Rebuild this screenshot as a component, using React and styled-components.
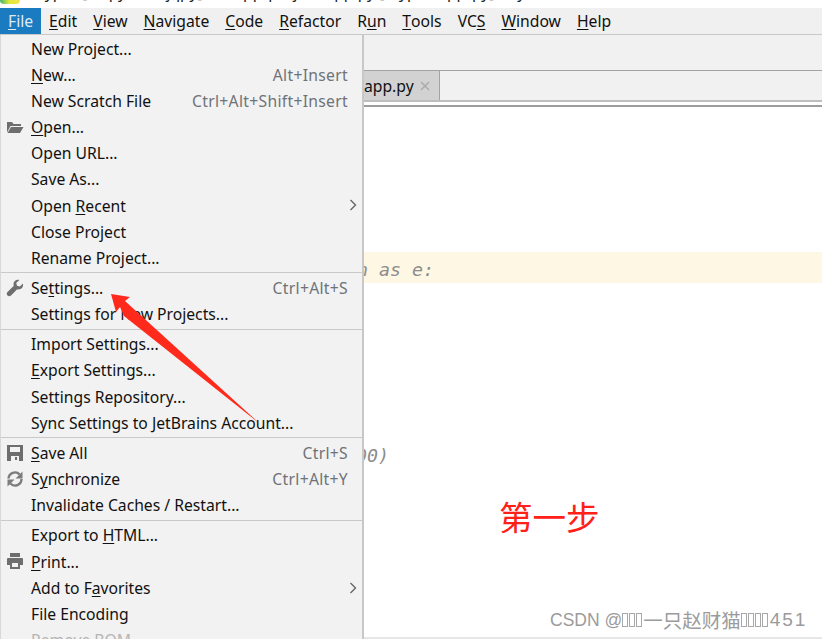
import React from 'react';
import styled, { createGlobalStyle } from 'styled-components';

const GlobalStyle = createGlobalStyle`
  html, body {
    margin: 0;
    padding: 0;
    background: #fff;
  }
  body {
    font-family: "Noto Sans", "Liberation Sans", sans-serif;
    font-size: 15.7px;
    color: #111;
  }
`;

const Page = styled.div`
  position: relative;
  width: 822px;
  height: 639px;
  overflow: hidden;
  display: flex;
  flex-direction: column;
  background: #fff;
`;

const TitleBar = styled.div`
  height: 8px;
  display: flex;
  gap: 10px;
  overflow: hidden;
  background: #fff;
`;

const AppIcon = styled.div`
  width: 20px;
  height: 4px;
  background: linear-gradient(90deg, #3fb56a, #dfe83c 45%, #f4e64a);
  border-radius: 0 0 8px 8px;
`;

const TitleText = styled.div`
  margin-top: -18px;
  line-height: 20px;
  white-space: nowrap;
  color: #222;
`;

const MenuBar = styled.div`
  height: 26px;
  display: flex;
  background: #f0f0f0;
  border-bottom: 1px solid #c9c9c9;
`;

const MenuItem = styled.div`
  display: flex;
  align-items: center;
  padding: 0 8px;
  height: 26px;
  background: ${p => (p.$active ? '#1a7bc0' : 'transparent')};
  color: ${p => (p.$active ? '#dfeaf3' : '#111')};
`;

const Toolbar = styled.div`
  height: 35px;
  background: #f1f1f1;
  border-bottom: 1px solid #a3a3a3;
`;

const TabBar = styled.div`
  height: 29px;
  display: flex;
  padding-left: 340px;
  background: #f1f1f1;
  border-bottom: 2px solid #bdbdbd;
`;

const Tab = styled.div`
  width: 75px;
  padding-left: 24px;
  display: flex;
  align-items: center;
  gap: 6px;
  background: #d2d2d2;
  border-right: 1px solid #a3a3a3;
`;

const CloseMark = styled.svg`
  width: 10px;
  height: 10px;
  stroke: #a9a9a9;
  stroke-width: 1.4;
`;

const EditorTop = styled.div`
  height: 3px;
  background: #fff;
  border-bottom: 2px solid #9c9c9c;
`;

const Editor = styled.div`
  flex: 1;
  padding-top: 145px;
  display: flex;
  flex-direction: column;
  border-bottom: 2px solid #e6e6e6;
  font-family: "DejaVu Sans Mono", "Liberation Mono", monospace;
  font-style: italic;
  font-size: 18.27px;
  color: #8c8c8c;
`;

const CodeLine = styled.div`
  box-sizing: border-box;
  height: ${p => p.$height}px;
  margin-bottom: ${p => p.$after || 0}px;
  padding-left: ${p => p.$indent}px;
  padding-top: ${p => (p.$caret ? 4 : 0)}px;
  display: flex;
  align-items: center;
  white-space: pre;
  background: ${p => (p.$caret ? '#fdf7e3' : 'transparent')};
`;

/* dropdown hangs over the editor */
const Menu = styled.div`
  position: absolute;
  left: 0;
  top: 35px;
  width: 361px;
  height: 620px;
  padding-top: 0.6px;
  background: #f2f2f2;
  border-left: 1px solid #d8d8d8;
  border-right: 2px solid #c8c8c8;
`;

const Row = styled.div`
  position: relative;
  display: flex;
  align-items: center;
  justify-content: space-between;
  height: 26.15px;
  padding: 0 14px 0 30px;
  white-space: nowrap;
  color: ${p => (p.$disabled ? '#b5b5b5' : '#111')};
`;

const Shortcut = styled.span`
  color: #6f7378;
  letter-spacing: 0.3px;
`;

const Separator = styled.div`
  height: 1px;
  margin: 1.5px 0 1.55px;
  background: #c9c9c9;
`;

const Glyph = styled.svg`
  position: absolute;
  left: 5px;
  top: 4px;
  width: 18px;
  height: 18px;
  fill: #6e6e6e;
`;

const Chevron = styled.svg`
  position: absolute;
  right: 5px;
  top: 7px;
  width: 8px;
  height: 12px;
  fill: none;
  stroke: #666;
  stroke-width: 1.4;
`;

const Key = styled.span`
  text-decoration: underline;
  text-underline-offset: 2px;
  text-decoration-thickness: 1px;
`;

const Arrow = styled.svg`
  position: absolute;
  left: 0;
  top: 0;
  width: 822px;
  height: 639px;
  pointer-events: none;
`;

const StepLabel = styled.div`
  position: absolute;
  left: 499px;
  top: 494px;
  font-family: "Noto Sans CJK SC", sans-serif;
  font-size: 33.5px;
  line-height: 44px;
  color: #ff2018;
`;

const Watermark = styled.div`
  position: absolute;
  left: 550px;
  top: 609px;
  display: flex;
  align-items: center;
  font-family: "Liberation Sans", "Noto Sans CJK SC", sans-serif;
  font-size: 17.5px;
  line-height: 22px;
  white-space: pre;
  color: #9b9b9b;
`;

const Tofu = styled.span`
  box-sizing: border-box;
  width: 6px;
  height: 14px;
  margin-right: 1px;
  border: 1px solid #a8a8a8;
`;

const WatermarkName = styled.span`
  font-family: "Noto Sans CJK SC", sans-serif;
  font-size: 19.5px;
`;

const WatermarkDigits = styled.span`
  margin-left: 1px;
  font-size: 19px;
  letter-spacing: 2px;
`;

const menuBar = [
  ['', 'F', 'ile'],
  ['', 'E', 'dit'],
  ['', 'V', 'iew'],
  ['', 'N', 'avigate'],
  ['', 'C', 'ode'],
  ['', 'R', 'efactor'],
  ['R', 'u', 'n'],
  ['', 'T', 'ools'],
  ['VC', 'S', ''],
  ['', 'W', 'indow'],
  ['', 'H', 'elp'],
];

const FolderIcon = () => (
  <Glyph viewBox="0 0 18 18">
    <path d="M1 4h5l1.5 2H15v2H4.5L1 14.5zM5 9h12.5L14 15H1.5z" />
  </Glyph>
);

const WrenchIcon = () => (
  <Glyph viewBox="0 0 18 18">
    <path d="M17 4.5l-3.2 3-2.8-.8-.8-2.8 3.2-3C10.500 0 7.500 1.800 7.500 5c0 .7.1 1.300.3 1.800L1.500 13c-1 1-1 2.500 0 3.500s2.500 1 3.500 0l6.200-6.300c3.300 1 6.600-1.700 5.800-5.700z" />
  </Glyph>
);

const SaveIcon = () => (
  <Glyph viewBox="0 0 18 18">
    <path fillRule="evenodd" d="M1 1h16v16H1zM4 3v5h10V3zM5 12v5h8v-5zM9 13h2v3H9z" />
  </Glyph>
);

const SyncIcon = () => (
  <Glyph viewBox="0 0 18 18">
    <path d="M2.5 8.5a6.500 6.500 0 0 1 11.200-4" fill="none" stroke="#7c7c7c" strokeWidth="2.4" />
    <path d="M15.5 9a6.500 6.500 0 0 1-11.200 4.500" fill="none" stroke="#7c7c7c" strokeWidth="2.4" />
    <path d="M16.5 1.500v7h-7zM1.500 16.500v-7h7z" fill="#7c7c7c" />
  </Glyph>
);

const PrintIcon = () => (
  <Glyph viewBox="0 0 18 18">
    <path fillRule="evenodd" d="M4 1h10v4H4zM2 6h14a1 1 0 0 1 1 1v6h-3v4H4v-4H1V7a1 1 0 0 1 1-1zM6 11v4h6v-4z" />
  </Glyph>
);

const SubMenuMark = () => (
  <Chevron viewBox="0 0 8 12">
    <path d="M1.5 1l5 5-5 5" />
  </Chevron>
);

export default function App() {
  return (
    <Page>
      <GlobalStyle />
      <TitleBar>
        <AppIcon />
        <TitleText>
          mypro [D:\python\jqpy] - ...\app\project\app.py [mypro\app\py] - PyCharm 2019
        </TitleText>
      </TitleBar>
      <MenuBar>
        {menuBar.map(([before, key, after], i) => (
          <MenuItem key={i} $active={i === 0}>
            {before}
            <Key>{key}</Key>
            {after}
          </MenuItem>
        ))}
      </MenuBar>
      <Toolbar />
      <TabBar>
        <Tab>
          app.py
          <CloseMark viewBox="0 0 10 10">
            <path d="M1 1l8 8M9 1l-8 8" />
          </CloseMark>
        </Tab>
      </TabBar>
      <EditorTop />
      <Editor>
        <CodeLine $caret $height={31} $after={160} $indent={346}>
          {'on as e:'}
        </CodeLine>
        <CodeLine $height={24} $indent={345}>
          {'000)'}
        </CodeLine>
      </Editor>

      <Menu>
        <Row>New Project...</Row>
        <Row>
          <span><Key>N</Key>ew...</span>
          <Shortcut>Alt+Insert</Shortcut>
        </Row>
        <Row>
          New Scratch File
          <Shortcut>Ctrl+Alt+Shift+Insert</Shortcut>
        </Row>
        <Row>
          <FolderIcon />
          <span><Key>O</Key>pen...</span>
        </Row>
        <Row>Open URL...</Row>
        <Row>Save As...</Row>
        <Row>
          <span>Open <Key>R</Key>ecent</span>
          <SubMenuMark />
        </Row>
        <Row>Close Project</Row>
        <Row>Rename Project...</Row>
        <Separator />
        <Row>
          <WrenchIcon />
          <span>Se<Key>t</Key>tings...</span>
          <Shortcut>Ctrl+Alt+S</Shortcut>
        </Row>
        <Row>Settings for New Projects...</Row>
        <Separator />
        <Row>Import Settings...</Row>
        <Row><span><Key>E</Key>xport Settings...</span></Row>
        <Row>Settings Repository...</Row>
        <Row>Sync Settings to JetBrains Account...</Row>
        <Separator />
        <Row>
          <SaveIcon />
          <span><Key>S</Key>ave All</span>
          <Shortcut>Ctrl+S</Shortcut>
        </Row>
        <Row>
          <SyncIcon />
          <span>S<Key>y</Key>nchronize</span>
          <Shortcut>Ctrl+Alt+Y</Shortcut>
        </Row>
        <Row>Invalidate Caches / Restart...</Row>
        <Separator />
        <Row><span>Export to <Key>H</Key>TML...</span></Row>
        <Row>
          <PrintIcon />
          <span><Key>P</Key>rint...</span>
        </Row>
        <Row>
          <span>Add to F<Key>a</Key>vorites</span>
          <SubMenuMark />
        </Row>
        <Row>File Encoding</Row>
        <Row $disabled>Remove BOM</Row>
      </Menu>

      <Arrow viewBox="0 0 822 639">
        <polygon
          points="111,294 130,297 125,301 260,424 124,316 120,307 116,312"
          fill="#ff2a1c"
        />
      </Arrow>
      <StepLabel>第一步</StepLabel>
      <Watermark>
        CSDN @<Tofu /><Tofu /><Tofu />
        <WatermarkName>一只赵财猫</WatermarkName>
        <Tofu /><Tofu /><Tofu /><Tofu />
        <WatermarkDigits>451</WatermarkDigits>
      </Watermark>
    </Page>
  );
}
